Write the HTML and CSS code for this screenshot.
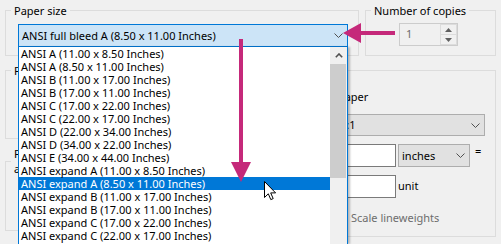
FILE: index.html
```html
<!DOCTYPE html>
<html>
<head>
    <link rel="stylesheet" href="styles.css">
</head>
<body>
    <div class="dialog">
        <div class="row">
            <fieldset class="group paper-size">
                <legend>Paper size</legend>
                <div class="combo open">
                    <span class="combo-text">ANSI full bleed A (8.50 x 11.00 Inches)</span>
                    <svg class="chevron" width="9" height="5" viewBox="0 0 9 5"><polyline points="0.5,0.5 4.5,4.5 8.5,0.5" fill="none" stroke="#505050"/></svg>
                    <div class="dropdown">
                        <ul class="options">
                            <li>ANSI A (11.00 x 8.50 Inches)</li>
                            <li>ANSI A (8.50 x 11.00 Inches)</li>
                            <li>ANSI B (11.00 x 17.00 Inches)</li>
                            <li>ANSI B (17.00 x 11.00 Inches)</li>
                            <li>ANSI C (17.00 x 22.00 Inches)</li>
                            <li>ANSI C (22.00 x 17.00 Inches)</li>
                            <li>ANSI D (22.00 x 34.00 Inches)</li>
                            <li>ANSI D (34.00 x 22.00 Inches)</li>
                            <li>ANSI E (34.00 x 44.00 Inches)</li>
                            <li>ANSI expand A (11.00 x 8.50 Inches)</li>
                            <li class="selected">ANSI expand A (8.50 x 11.00 Inches)</li>
                            <li>ANSI expand B (11.00 x 17.00 Inches)</li>
                            <li>ANSI expand B (17.00 x 11.00 Inches)</li>
                            <li>ANSI expand C (17.00 x 22.00 Inches)</li>
                            <li>ANSI expand C (22.00 x 17.00 Inches)</li>
                        </ul>
                        <div class="scrollbar">
                            <div class="scroll-btn">
                                <svg width="8" height="5" viewBox="0 0 8 5"><polyline points="0.8,4.2 4,1 7.2,4.2" fill="none" stroke="#505050" stroke-width="1.6"/></svg>
                            </div>
                            <div class="scroll-thumb"></div>
                        </div>
                    </div>
                </div>
            </fieldset>
            <fieldset class="group copies">
                <legend>Number of copies</legend>
                <div class="spin">
                    <span class="spin-value">1</span>
                    <div class="spin-btns">
                        <span class="spin-btn"><svg width="7" height="4" viewBox="0 0 7 4"><polygon points="0,4 3.5,0 7,4" fill="#606060"/></svg></span>
                        <span class="spin-btn"><svg width="7" height="4" viewBox="0 0 7 4"><polygon points="0,0 7,0 3.5,4" fill="#606060"/></svg></span>
                    </div>
                </div>
            </fieldset>
        </div>

        <div class="row">
            <div class="left-col">
                <fieldset class="group plot-area">
                    <legend>Plot area</legend>
                </fieldset>
                <fieldset class="group plot-offset">
                    <legend>Plot offset (origin set to printable area)</legend>
                </fieldset>
            </div>
            <fieldset class="group plot-scale">
                <legend>Plot scale</legend>
                <div class="check-row fit-row">
                    <span class="checkbox"></span>
                    <span>Fit to paper</span>
                </div>
                <div class="scale-row">
                    <span>Scale:</span>
                    <div class="combo small scale-combo">
                        <span class="combo-text">1:1</span>
                        <svg class="chevron" width="9" height="5" viewBox="0 0 9 5"><polyline points="0.5,0.5 4.5,4.5 8.5,0.5" fill="none" stroke="#505050"/></svg>
                    </div>
                </div>
                <div class="unit-row">
                    <span class="textbox">1</span>
                    <div class="combo small units-combo">
                        <span class="combo-text">inches</span>
                        <svg class="chevron" width="9" height="5" viewBox="0 0 9 5"><polyline points="0.5,0.5 4.5,4.5 8.5,0.5" fill="none" stroke="#505050"/></svg>
                    </div>
                    <span class="equals">=</span>
                </div>
                <div class="unit-row">
                    <span class="textbox">1</span>
                    <span class="unit-label">unit</span>
                </div>
                <div class="check-row lineweights-row">
                    <span class="checkbox"></span>
                    <span class="disabled">Scale lineweights</span>
                </div>
            </fieldset>
        </div>
    </div>

    <!-- annotation overlays -->
    <svg class="arrow arrow-left" width="52" height="21" viewBox="0 0 52 21">
        <polygon points="0,10 18,0 18,20" fill="#c5297a"/>
        <rect x="17" y="8" width="35" height="4" fill="#c5297a"/>
    </svg>
    <svg class="arrow arrow-down" width="20" height="143" viewBox="0 0 20 143">
        <rect x="8" y="0" width="4" height="124" fill="#c5297a"/>
        <polygon points="0,123 20,123 10,143" fill="#c5297a"/>
    </svg>
    <svg class="cursor" width="13" height="20" viewBox="0 0 13 20">
        <path d="M0.5 0.5 L0.5 16.5 L4.3 12.8 L6.8 18.6 L9.2 17.6 L6.7 11.9 L11.6 11.9 Z" fill="#fff" stroke="#000" stroke-linejoin="round"/>
    </svg>
</body>
</html>
```

FILE: styles.css
```css
* { box-sizing: border-box; }
body {
    margin: 0;
    width: 501px;
    height: 244px;
    overflow: hidden;
    position: relative;
    background-color: #f0f0f0;
    font-family: "Noto Sans", sans-serif;
    font-size: 11px;
    color: #000;
}
.dialog { padding: 3px 5px 0 5px; }
.row { display: flex; justify-content: space-between; }
.row + .row { margin-top: 7px; }

.group {
    margin: 0;
    padding: 0;
    min-width: 0;
    border: 1px solid #dcdcdc;
}
.group legend {
    margin-left: 5px;
    padding: 0 3px;
    line-height: 15px;
}

.paper-size { width: 354px; height: 53px; }
.copies { width: 131px; height: 53px; }
.left-col { width: 186px; }
.plot-area { height: 76px; }
.plot-offset { height: 85px; margin-top: 7px; }
.plot-scale { width: 216px; height: 174px; }

/* combo boxes */
.combo {
    position: relative;
    display: flex;
    align-items: center;
    justify-content: space-between;
    height: 23px;
    padding: 0 4px 0 3px;
    background-color: #e1e1e1;
    border: 1px solid #adadad;
    line-height: 20px;
    white-space: nowrap;
}
.paper-size .combo { margin: 6px 10px 0 12px; }
.combo.open {
    background-color: #cce4f7;
    border-color: #0078d7;
}
.chevron { flex: none; }

.dropdown {
    position: absolute;
    top: calc(100% + 1px);
    left: -1px;
    right: -1px;
    height: 197px;
    display: flex;
    background-color: #fff;
    border: 1px solid #0078d7;
    border-top: 0;
    border-bottom: 0;
    box-shadow: 2px 0 2px rgba(0, 0, 0, 0.25);
    z-index: 10;
}
.options {
    flex: 1;
    margin: 0;
    padding: 0;
    list-style: none;
}
.options li {
    height: 13px;
    line-height: 13px;
    padding-left: 2px;
}
.options li.selected { background-color: #0078d7; color: #fff; }
.scrollbar {
    width: 17px;
    background-color: #f0f0f0;
}
.scroll-btn {
    height: 17px;
    display: flex;
    align-items: center;
    justify-content: center;
}
.scroll-thumb {
    height: 114px;
    margin: 0 1px 0 0;
    background-color: #cdcdcd;
}

/* spin box */
.spin {
    display: flex;
    width: 59px;
    height: 23px;
    margin: 5px 0 0 33px;
    border: 1px solid #cccccc;
    background-color: #f0f0f0;
}
.spin-value {
    flex: 1;
    padding-left: 6px;
    line-height: 20px;
    color: #6d6d6d;
}
.spin-btns {
    width: 17px;
    display: flex;
    flex-direction: column;
}
.spin-btn {
    flex: 1;
    display: flex;
    align-items: center;
    justify-content: center;
    border: 1px solid #dcdcdc;
}
.spin-btn + .spin-btn { border-top: 0; }

/* plot scale */
.check-row { display: flex; align-items: center; gap: 4px; height: 15px; }
.checkbox {
    width: 13px;
    height: 13px;
    background-color: #fff;
    border: 1px solid #333;
}
.fit-row { margin: 11px 0 0 11px; }
.scale-row {
    display: flex;
    align-items: center;
    height: 22px;
    margin: 10px 10px 0 9px;
}
.scale-combo { width: 149px; height: 22px; margin-left: auto; }
.unit-row {
    display: flex;
    height: 23px;
    margin: 8px 0 0 55px;
}
.textbox {
    width: 60px;
    height: 23px;
    padding-left: 3px;
    line-height: 20px;
    background-color: #fff;
    border: 1px solid #7a7a7a;
    color: #fff;
}
.units-combo { width: 72px; margin-left: 2px; }
.equals { margin-left: 5px; line-height: 14px; }
.unit-label { margin-left: 2px; line-height: 21px; }
.lineweights-row { margin: 12px 0 0 52px; gap: 5px; }
.disabled { color: #6d6d6d; }

/* annotation overlays */
.arrow, .cursor { position: absolute; z-index: 20; }
.arrow-left { left: 343px; top: 23px; }
.arrow-down { left: 231px; top: 39px; }
.cursor { left: 264px; top: 181px; }
```
